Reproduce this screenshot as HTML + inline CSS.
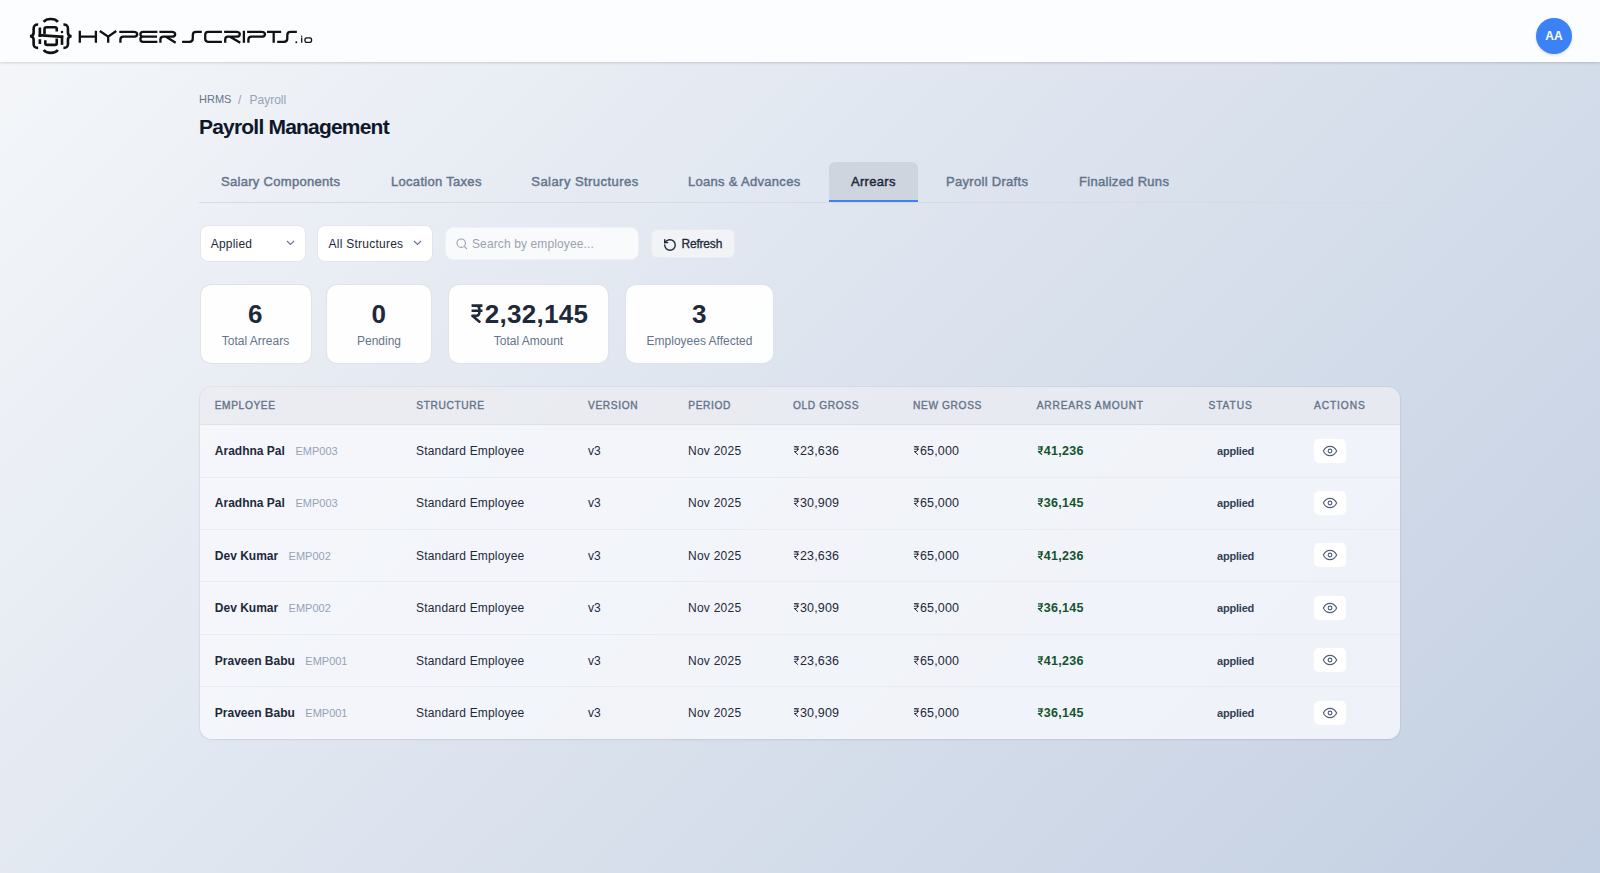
<!DOCTYPE html>
<html><head><meta charset="utf-8"><style>
*{margin:0;padding:0;box-sizing:border-box}
html,body{width:1600px;height:873px;overflow:hidden}
body{font-family:"Liberation Sans",sans-serif;background:linear-gradient(135deg,#f5f7fa 0%,#c3cfe2 100%);position:relative;color:#1e293b}
.abs{position:absolute;white-space:nowrap}
#hdr{position:absolute;left:0;top:0;width:1600px;height:62px;background:#fcfdfe;box-shadow:0 1px 3px rgba(0,0,0,0.1),0 1px 2px rgba(0,0,0,0.06)}
#avatar{position:absolute;left:1536px;top:18px;width:36px;height:36px;border-radius:50%;background:#3b82f6;color:#fff;font-weight:bold;font-size:12px;text-align:center;line-height:36px;letter-spacing:0.2px;box-shadow:0 1px 3px rgba(0,0,0,0.15)}
.crumb{font-size:12px;top:92px;line-height:16px}
#title{left:199px;top:114px;font-size:21px;font-weight:bold;color:#0f172a;line-height:26px;letter-spacing:-0.8px}
.tab{position:absolute;top:162px;height:40px;font-size:13px;line-height:40px;letter-spacing:0.3px;color:#64748b;-webkit-text-stroke:0.45px #64748b;white-space:nowrap}
#tabline{position:absolute;left:199px;top:202px;width:1201px;height:1px;background:#d5dbe4}
#activetab{position:absolute;left:829px;top:162px;width:89px;height:40px;background:#cfd5df;border-radius:6px 6px 0 0;border-bottom:2px solid #3b82f6}
.sel{position:absolute;top:224.5px;height:37.5px;background:#fff;border:1px solid #e2e6ec;border-radius:8px}
.seltxt{position:absolute;font-size:12px;color:#1e293b;line-height:16px;white-space:nowrap}
.card{position:absolute;top:283.5px;height:80.5px;background:rgba(255,255,255,0.94);border-radius:11px;border:1px solid rgba(214,220,229,0.8)}
.cval{position:absolute;left:0;right:0;text-align:center;top:14px;font-size:26px;letter-spacing:0.3px;font-weight:bold;color:#1e293b;line-height:30px;white-space:nowrap}
.clab{position:absolute;left:0;right:0;text-align:center;top:49px;font-size:12px;color:#64748b;line-height:14px;white-space:nowrap}
#table{position:absolute;left:200px;top:386.5px;width:1200px;height:352.5px;border-radius:12px;overflow:hidden;background:rgba(248,249,252,0.8);box-shadow:0 0 0 1px rgba(100,116,139,0.07),0 1px 3px rgba(15,23,42,0.05)}
#thead{position:absolute;left:0;top:0;width:1200px;height:38px;background:rgba(60,64,76,0.05);border-bottom:1px solid rgba(100,116,139,0.09)}
.th{position:absolute;top:13.2px;font-size:10.2px;color:#64748b;-webkit-text-stroke:0.35px #64748b;letter-spacing:0.62px;line-height:12px;white-space:nowrap}
.row{position:absolute;left:0;width:1200px;height:53px;border-bottom:1px solid #e8ebef}
.td{position:absolute;top:18.4px;font-size:12px;color:#1e293b;line-height:16px;white-space:nowrap}
.nm{font-weight:bold;font-size:12px}
.emp{font-size:11px;color:#94a3b8}
.grn{color:#14532d;font-weight:bold;letter-spacing:0.3px;font-size:12.5px}
.num{font-size:12.5px;letter-spacing:0.15px}
.st{font-size:11px;color:#334155;font-weight:bold;letter-spacing:-0.2px}
.eye{position:absolute;left:1114px;top:14px;width:32px;height:24px;background:#fff;border-radius:5px}
.rs{display:inline-block;vertical-align:baseline}
</style></head><body>
<div id="hdr"><svg id="logo" style="position:absolute;left:0;top:0" width="330" height="62" viewBox="0 0 330 62"><g fill="none" stroke="#111" stroke-linecap="butt"><g transform="translate(20,10) scale(0.0625)" stroke-width="42"><path d="M290 232C235 232 218 250 218 300V365C218 400 200 418 160 420C200 422 218 440 218 475V545C218 590 235 605 290 605"/><path d="M695 232C750 232 767 250 767 300V365C767 400 785 418 825 420C785 422 767 440 767 475V545C767 590 750 605 695 605"/><path d="M378 190C425 128 560 128 607 190"/><path d="M378 640C425 702 560 702 607 640"/><path d="M392 385V305Q392 275 425 275H560Q588 275 588 305V345"/><path d="M298 402L692 430" stroke-width="44"/><path d="M588 455V530Q588 558 560 558H435Q405 558 405 530V482"/><path d="M318 280V430M318 468V545"/><path d="M672 410V558"/><circle cx="672" cy="350" r="20" fill="#111" stroke="none"/></g><g stroke-width="2.3"><path d="M79.8 30.8V42.8M95.9 30.8V42.8M79.8 36.7H95.9"/><path d="M99.8 31L108.2 36.7L116.2 31M108.2 36.7V42.8"/><path d="M119.3 31.8H133.5Q137.2 31.8 137.2 34.2Q137.2 36.7 133.5 36.7H123.5Q120.4 36.7 120.4 39.5V42.8"/><path d="M157.4 31.8H143Q140.4 31.8 140.4 34.3Q140.4 36.7 143 36.7H157M157.4 41.8H143Q140.4 41.8 140.4 39.3Q140.4 36.7 143 36.7"/><path d="M159.4 31.8H171.5Q175.2 31.8 175.2 34.2Q175.2 36.7 171.5 36.7H163.5Q160.4 36.7 160.4 39.5V42.8M166 36.7L175.7 42.8"/><path d="M182.1 41.8H189.5Q192.8 41.8 192.8 38.5V35Q192.8 31.8 196 31.8H201.8"/><path d="M221.9 31.8H208Q205.2 31.8 205.2 35V38.6Q205.2 41.8 208 41.8H221.9"/><path d="M224.1 31.8H236.2Q239.8 31.8 239.8 34.2Q239.8 36.7 236.2 36.7H228Q225.2 36.7 225.2 39.5V42.8M230 36.7L240.3 42.8"/><path d="M243.9 30.8V42.8"/><path d="M247.1 31.8H261.5Q265 31.8 265 34.2Q265 36.7 261.5 36.7H251.5Q248.4 36.7 248.4 39.5V42.8"/><path d="M267 31.8H281.2M273.7 31.8V42.8"/><path d="M277.2 41.8H284Q287.3 41.8 287.3 38.5V35Q287.3 31.8 290.5 31.8H296.9"/></g><g stroke-width="1.3"><path d="M301.7 37.6V42.8"/><path d="M306.5 37.8H310Q311.6 37.8 311.6 40.1Q311.6 42.3 310 42.3H306.5Q304.9 42.3 304.9 40.1Q304.9 37.8 306.5 37.8Z"/></g><circle cx="296.3" cy="42.2" r="1" fill="#111" stroke="none"/><circle cx="301.7" cy="36.2" r="0.7" fill="#111" stroke="none"/></g></svg><div id="avatar">AA</div></div>
<div class="abs crumb" style="left:199px;color:#64748b;font-size:11px;top:91px">HRMS</div>
<div class="abs crumb" style="left:238px;color:#94a3b8">/</div>
<div class="abs crumb" style="left:249.5px;color:#94a3b8">Payroll</div>
<div class="abs" id="title">Payroll Management</div>
<div id="activetab"></div><div id="tabline"></div>
<div class="tab" style="left:221px">Salary Components</div>
<div class="tab" style="left:391px">Location Taxes</div>
<div class="tab" style="left:531.3px;letter-spacing:0.45px">Salary Structures</div>
<div class="tab" style="left:688px">Loans &amp; Advances</div>
<div class="tab" style="left:851px;color:#1e293b;-webkit-text-stroke:0.45px #1e293b">Arrears</div>
<div class="tab" style="left:946px">Payroll Drafts</div>
<div class="tab" style="left:1079px">Finalized Runs</div>
<div class="sel" style="left:199.5px;width:106px"><div class="seltxt" style="left:10.3px;top:10px;letter-spacing:0.2px">Applied</div><svg width="9" height="6" viewBox="0 0 9 6" style="position:absolute;left:85px;top:14.5px"><path d="M1 1L4.5 4.5L8 1" fill="none" stroke="#64748b" stroke-width="1.1"/></svg></div>
<div class="sel" style="left:316.5px;width:116.5px"><div class="seltxt" style="left:11px;top:10px;letter-spacing:0.25px">All Structures</div><svg width="9" height="6" viewBox="0 0 9 6" style="position:absolute;left:95px;top:14.5px"><path d="M1 1L4.5 4.5L8 1" fill="none" stroke="#64748b" stroke-width="1.1"/></svg></div>
<div class="abs" style="left:444.5px;top:226.5px;width:194.5px;height:33.5px;background:#f8fafc;border-radius:8px;border:1px solid #eef1f5"><svg width="12" height="12" viewBox="0 0 12 12" style="position:absolute;left:10.5px;top:10.5px"><circle cx="5.2" cy="5.2" r="4.2" fill="none" stroke="#9ca3af" stroke-width="1.1"/><path d="M8.3 8.3L11 11" stroke="#9ca3af" stroke-width="1.1"/></svg><div class="seltxt" style="left:26.5px;top:8.5px;color:#9ca3af;letter-spacing:0.12px">Search by employee...</div></div>
<div class="abs" style="left:650.5px;top:228.5px;width:84px;height:29px;background:#f1f3f6;border-radius:6px;border:1px solid #e8ebef"><svg width="14" height="14" viewBox="0 0 24 24" style="position:absolute;left:11.5px;top:8.5px"><path d="M3 12a9 9 0 1 0 9-9 9.75 9.75 0 0 0-6.74 2.74L3 8" fill="none" stroke="#1e293b" stroke-width="2.4" stroke-linecap="round" stroke-linejoin="round"/><path d="M3 3v5h5" fill="none" stroke="#1e293b" stroke-width="2.4" stroke-linecap="round" stroke-linejoin="round"/></svg><div class="seltxt" style="left:30px;top:6.5px;font-size:12px;letter-spacing:-0.2px;-webkit-text-stroke:0.3px #1e293b">Refresh</div></div>
<div class="card" style="left:199.5px;width:112px"><div class="cval">6</div><div class="clab">Total Arrears</div></div>
<div class="card" style="left:326px;width:106px"><div class="cval">0</div><div class="clab">Pending</div></div>
<div class="card" style="left:448px;width:161px"><div class="cval"><svg class="rs" width="16" height="19" viewBox="0 0 10 14" style="width:16px;height:19px"><path d="M1 1.2H9M1 5H9M2.2 1.2H4.6C7.6 1.2 7.6 8.6 4.6 8.6H1.6L7.4 13.6" fill="none" stroke="currentColor" stroke-width="1.9" stroke-linejoin="round"/></svg>2,32,145</div><div class="clab">Total Amount</div></div>
<div class="card" style="left:625px;width:149px"><div class="cval">3</div><div class="clab">Employees Affected</div></div>
<div id="table"><div id="thead">
<div class="th" style="left:14.7px">EMPLOYEE</div>
<div class="th" style="left:216.25px">STRUCTURE</div>
<div class="th" style="left:388px">VERSION</div>
<div class="th" style="left:488.25px">PERIOD</div>
<div class="th" style="left:593px">OLD GROSS</div>
<div class="th" style="left:713px">NEW GROSS</div>
<div class="th" style="left:836.75px;letter-spacing:0.82px">ARREARS AMOUNT</div>
<div class="th" style="left:1008.4px;letter-spacing:0.95px">STATUS</div>
<div class="th" style="left:1114px;letter-spacing:0.9px">ACTIONS</div>
</div>
<div class="row" style="top:38.0px">
<div class="td nm" style="left:14.8px">Aradhna Pal</div>
<div class="td emp" style="left:95.5px">EMP003</div>
<div class="td" style="left:216px;letter-spacing:0.18px">Standard Employee</div>
<div class="td" style="left:388px">v3</div>
<div class="td" style="left:488px;letter-spacing:0.25px">Nov 2025</div>
<div class="td num" style="left:593px"><svg class="rs" width="7" height="9" viewBox="0 0 10 14" style="width:7px;height:9px"><path d="M1 1.2H9M1 5H9M2.2 1.2H4.6C7.6 1.2 7.6 8.6 4.6 8.6H1.6L7.4 13.6" fill="none" stroke="currentColor" stroke-width="1.5" stroke-linejoin="round"/></svg>23,636</div>
<div class="td num" style="left:713px"><svg class="rs" width="7" height="9" viewBox="0 0 10 14" style="width:7px;height:9px"><path d="M1 1.2H9M1 5H9M2.2 1.2H4.6C7.6 1.2 7.6 8.6 4.6 8.6H1.6L7.4 13.6" fill="none" stroke="currentColor" stroke-width="1.5" stroke-linejoin="round"/></svg>65,000</div>
<div class="td grn" style="left:836.75px"><svg class="rs" width="7" height="9" viewBox="0 0 10 14" style="width:7px;height:9px"><path d="M1 1.2H9M1 5H9M2.2 1.2H4.6C7.6 1.2 7.6 8.6 4.6 8.6H1.6L7.4 13.6" fill="none" stroke="currentColor" stroke-width="1.9" stroke-linejoin="round"/></svg>41,236</div>
<div class="td st" style="left:1017px">applied</div>
<div class="eye"><svg width="16" height="16" viewBox="0 0 24 24" style="position:absolute;left:8px;top:4px"><path d="M2 12s3.5-7 10-7 10 7 10 7-3.5 7-10 7-10-7-10-7Z" fill="none" stroke="#526078" stroke-width="1.7" stroke-linejoin="round"/><circle cx="12" cy="12" r="2.8" fill="none" stroke="#526078" stroke-width="1.7"/></svg></div>
</div>
<div class="row" style="top:90.42px">
<div class="td nm" style="left:14.8px">Aradhna Pal</div>
<div class="td emp" style="left:95.5px">EMP003</div>
<div class="td" style="left:216px;letter-spacing:0.18px">Standard Employee</div>
<div class="td" style="left:388px">v3</div>
<div class="td" style="left:488px;letter-spacing:0.25px">Nov 2025</div>
<div class="td num" style="left:593px"><svg class="rs" width="7" height="9" viewBox="0 0 10 14" style="width:7px;height:9px"><path d="M1 1.2H9M1 5H9M2.2 1.2H4.6C7.6 1.2 7.6 8.6 4.6 8.6H1.6L7.4 13.6" fill="none" stroke="currentColor" stroke-width="1.5" stroke-linejoin="round"/></svg>30,909</div>
<div class="td num" style="left:713px"><svg class="rs" width="7" height="9" viewBox="0 0 10 14" style="width:7px;height:9px"><path d="M1 1.2H9M1 5H9M2.2 1.2H4.6C7.6 1.2 7.6 8.6 4.6 8.6H1.6L7.4 13.6" fill="none" stroke="currentColor" stroke-width="1.5" stroke-linejoin="round"/></svg>65,000</div>
<div class="td grn" style="left:836.75px"><svg class="rs" width="7" height="9" viewBox="0 0 10 14" style="width:7px;height:9px"><path d="M1 1.2H9M1 5H9M2.2 1.2H4.6C7.6 1.2 7.6 8.6 4.6 8.6H1.6L7.4 13.6" fill="none" stroke="currentColor" stroke-width="1.9" stroke-linejoin="round"/></svg>36,145</div>
<div class="td st" style="left:1017px">applied</div>
<div class="eye"><svg width="16" height="16" viewBox="0 0 24 24" style="position:absolute;left:8px;top:4px"><path d="M2 12s3.5-7 10-7 10 7 10 7-3.5 7-10 7-10-7-10-7Z" fill="none" stroke="#526078" stroke-width="1.7" stroke-linejoin="round"/><circle cx="12" cy="12" r="2.8" fill="none" stroke="#526078" stroke-width="1.7"/></svg></div>
</div>
<div class="row" style="top:142.84px">
<div class="td nm" style="left:14.8px">Dev Kumar</div>
<div class="td emp" style="left:88.6px">EMP002</div>
<div class="td" style="left:216px;letter-spacing:0.18px">Standard Employee</div>
<div class="td" style="left:388px">v3</div>
<div class="td" style="left:488px;letter-spacing:0.25px">Nov 2025</div>
<div class="td num" style="left:593px"><svg class="rs" width="7" height="9" viewBox="0 0 10 14" style="width:7px;height:9px"><path d="M1 1.2H9M1 5H9M2.2 1.2H4.6C7.6 1.2 7.6 8.6 4.6 8.6H1.6L7.4 13.6" fill="none" stroke="currentColor" stroke-width="1.5" stroke-linejoin="round"/></svg>23,636</div>
<div class="td num" style="left:713px"><svg class="rs" width="7" height="9" viewBox="0 0 10 14" style="width:7px;height:9px"><path d="M1 1.2H9M1 5H9M2.2 1.2H4.6C7.6 1.2 7.6 8.6 4.6 8.6H1.6L7.4 13.6" fill="none" stroke="currentColor" stroke-width="1.5" stroke-linejoin="round"/></svg>65,000</div>
<div class="td grn" style="left:836.75px"><svg class="rs" width="7" height="9" viewBox="0 0 10 14" style="width:7px;height:9px"><path d="M1 1.2H9M1 5H9M2.2 1.2H4.6C7.6 1.2 7.6 8.6 4.6 8.6H1.6L7.4 13.6" fill="none" stroke="currentColor" stroke-width="1.9" stroke-linejoin="round"/></svg>41,236</div>
<div class="td st" style="left:1017px">applied</div>
<div class="eye"><svg width="16" height="16" viewBox="0 0 24 24" style="position:absolute;left:8px;top:4px"><path d="M2 12s3.5-7 10-7 10 7 10 7-3.5 7-10 7-10-7-10-7Z" fill="none" stroke="#526078" stroke-width="1.7" stroke-linejoin="round"/><circle cx="12" cy="12" r="2.8" fill="none" stroke="#526078" stroke-width="1.7"/></svg></div>
</div>
<div class="row" style="top:195.26px">
<div class="td nm" style="left:14.8px">Dev Kumar</div>
<div class="td emp" style="left:88.6px">EMP002</div>
<div class="td" style="left:216px;letter-spacing:0.18px">Standard Employee</div>
<div class="td" style="left:388px">v3</div>
<div class="td" style="left:488px;letter-spacing:0.25px">Nov 2025</div>
<div class="td num" style="left:593px"><svg class="rs" width="7" height="9" viewBox="0 0 10 14" style="width:7px;height:9px"><path d="M1 1.2H9M1 5H9M2.2 1.2H4.6C7.6 1.2 7.6 8.6 4.6 8.6H1.6L7.4 13.6" fill="none" stroke="currentColor" stroke-width="1.5" stroke-linejoin="round"/></svg>30,909</div>
<div class="td num" style="left:713px"><svg class="rs" width="7" height="9" viewBox="0 0 10 14" style="width:7px;height:9px"><path d="M1 1.2H9M1 5H9M2.2 1.2H4.6C7.6 1.2 7.6 8.6 4.6 8.6H1.6L7.4 13.6" fill="none" stroke="currentColor" stroke-width="1.5" stroke-linejoin="round"/></svg>65,000</div>
<div class="td grn" style="left:836.75px"><svg class="rs" width="7" height="9" viewBox="0 0 10 14" style="width:7px;height:9px"><path d="M1 1.2H9M1 5H9M2.2 1.2H4.6C7.6 1.2 7.6 8.6 4.6 8.6H1.6L7.4 13.6" fill="none" stroke="currentColor" stroke-width="1.9" stroke-linejoin="round"/></svg>36,145</div>
<div class="td st" style="left:1017px">applied</div>
<div class="eye"><svg width="16" height="16" viewBox="0 0 24 24" style="position:absolute;left:8px;top:4px"><path d="M2 12s3.5-7 10-7 10 7 10 7-3.5 7-10 7-10-7-10-7Z" fill="none" stroke="#526078" stroke-width="1.7" stroke-linejoin="round"/><circle cx="12" cy="12" r="2.8" fill="none" stroke="#526078" stroke-width="1.7"/></svg></div>
</div>
<div class="row" style="top:247.68px">
<div class="td nm" style="left:14.8px">Praveen Babu</div>
<div class="td emp" style="left:105.3px">EMP001</div>
<div class="td" style="left:216px;letter-spacing:0.18px">Standard Employee</div>
<div class="td" style="left:388px">v3</div>
<div class="td" style="left:488px;letter-spacing:0.25px">Nov 2025</div>
<div class="td num" style="left:593px"><svg class="rs" width="7" height="9" viewBox="0 0 10 14" style="width:7px;height:9px"><path d="M1 1.2H9M1 5H9M2.2 1.2H4.6C7.6 1.2 7.6 8.6 4.6 8.6H1.6L7.4 13.6" fill="none" stroke="currentColor" stroke-width="1.5" stroke-linejoin="round"/></svg>23,636</div>
<div class="td num" style="left:713px"><svg class="rs" width="7" height="9" viewBox="0 0 10 14" style="width:7px;height:9px"><path d="M1 1.2H9M1 5H9M2.2 1.2H4.6C7.6 1.2 7.6 8.6 4.6 8.6H1.6L7.4 13.6" fill="none" stroke="currentColor" stroke-width="1.5" stroke-linejoin="round"/></svg>65,000</div>
<div class="td grn" style="left:836.75px"><svg class="rs" width="7" height="9" viewBox="0 0 10 14" style="width:7px;height:9px"><path d="M1 1.2H9M1 5H9M2.2 1.2H4.6C7.6 1.2 7.6 8.6 4.6 8.6H1.6L7.4 13.6" fill="none" stroke="currentColor" stroke-width="1.9" stroke-linejoin="round"/></svg>41,236</div>
<div class="td st" style="left:1017px">applied</div>
<div class="eye"><svg width="16" height="16" viewBox="0 0 24 24" style="position:absolute;left:8px;top:4px"><path d="M2 12s3.5-7 10-7 10 7 10 7-3.5 7-10 7-10-7-10-7Z" fill="none" stroke="#526078" stroke-width="1.7" stroke-linejoin="round"/><circle cx="12" cy="12" r="2.8" fill="none" stroke="#526078" stroke-width="1.7"/></svg></div>
</div>
<div class="row" style="top:300.1px;border-bottom:none">
<div class="td nm" style="left:14.8px">Praveen Babu</div>
<div class="td emp" style="left:105.3px">EMP001</div>
<div class="td" style="left:216px;letter-spacing:0.18px">Standard Employee</div>
<div class="td" style="left:388px">v3</div>
<div class="td" style="left:488px;letter-spacing:0.25px">Nov 2025</div>
<div class="td num" style="left:593px"><svg class="rs" width="7" height="9" viewBox="0 0 10 14" style="width:7px;height:9px"><path d="M1 1.2H9M1 5H9M2.2 1.2H4.6C7.6 1.2 7.6 8.6 4.6 8.6H1.6L7.4 13.6" fill="none" stroke="currentColor" stroke-width="1.5" stroke-linejoin="round"/></svg>30,909</div>
<div class="td num" style="left:713px"><svg class="rs" width="7" height="9" viewBox="0 0 10 14" style="width:7px;height:9px"><path d="M1 1.2H9M1 5H9M2.2 1.2H4.6C7.6 1.2 7.6 8.6 4.6 8.6H1.6L7.4 13.6" fill="none" stroke="currentColor" stroke-width="1.5" stroke-linejoin="round"/></svg>65,000</div>
<div class="td grn" style="left:836.75px"><svg class="rs" width="7" height="9" viewBox="0 0 10 14" style="width:7px;height:9px"><path d="M1 1.2H9M1 5H9M2.2 1.2H4.6C7.6 1.2 7.6 8.6 4.6 8.6H1.6L7.4 13.6" fill="none" stroke="currentColor" stroke-width="1.9" stroke-linejoin="round"/></svg>36,145</div>
<div class="td st" style="left:1017px">applied</div>
<div class="eye"><svg width="16" height="16" viewBox="0 0 24 24" style="position:absolute;left:8px;top:4px"><path d="M2 12s3.5-7 10-7 10 7 10 7-3.5 7-10 7-10-7-10-7Z" fill="none" stroke="#526078" stroke-width="1.7" stroke-linejoin="round"/><circle cx="12" cy="12" r="2.8" fill="none" stroke="#526078" stroke-width="1.7"/></svg></div>
</div>
</div>
</body></html>
